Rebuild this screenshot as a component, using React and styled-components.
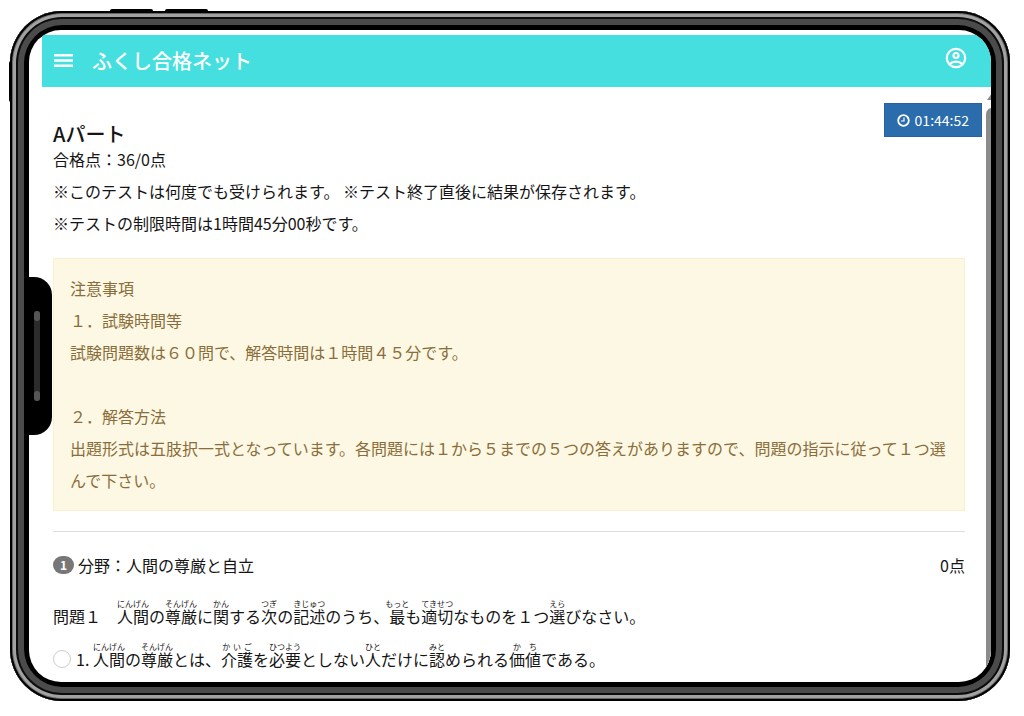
import React from "react";
import styled, { createGlobalStyle } from "styled-components";

const GlobalStyle = createGlobalStyle`
  * {
    box-sizing: border-box;
  }
  body {
    margin: 0;
    background: #fff;
    color: #151515;
    font-family: "Noto Sans CJK JP", "Noto Sans", sans-serif;
    font-size: 16px;
    line-height: 32px;
  }
`;

const Stage = styled.div`
  height: 100vh;
  padding: 11px 14px 15px 10px;
`;

const Device = styled.div`
  position: relative;
  height: 100%;
  padding: 19px;
  background: #000;
  border-radius: 52px;
  box-shadow: inset 0 0 0 2px #000, inset 0 0 0 3px #666,
    inset 0 0 0 6px #a2a2a2, inset 0 0 0 8px #0c0c0c, inset 0 0 0 14px #4b4b4b;
`;

const SideKey = styled.span`
  position: absolute;
  z-index: -1;
  background: #000;
  border-radius: 2px;
  top: ${props => props.$top}px;
  left: ${props => props.$left}px;
  width: ${props => (props.$upright ? 4 : 43)}px;
  height: ${props => (props.$upright ? 41 : 4)}px;
`;

const Notch = styled.div`
  position: absolute;
  left: 18px;
  top: 266px;
  width: 24px;
  height: 158px;
  border-radius: 0 18px 18px 0;
  background: #000;
`;

const Speaker = styled.div`
  display: flex;
  flex-direction: column;
  justify-content: space-between;
  width: 6px;
  height: 90px;
  margin: 34px 0 0 6px;
  border-radius: 3px;
  background: #2c2c2c;
`;

const SpeakerEnd = styled.span`
  height: 10px;
  border-radius: 3px;
  background: #555;
`;

const Screen = styled.div`
  display: flex;
  flex-direction: column;
  height: 100%;
  padding: 5px 0 0 13px;
  background: #fff;
  border-radius: 32px;
  overflow: hidden;
`;

const Header = styled.header`
  display: flex;
  flex: none;
  align-items: center;
  height: 52px;
  padding: 0 23px 0 12px;
  background: #45dfdf;
  color: #fff;
`;

const IconButton = styled.button`
  display: flex;
  padding: 0 0 ${props => (props.$raised ? 6 : 0)}px;
  border: 0;
  background: none;
  color: inherit;
`;

const SiteName = styled.span`
  flex: 1;
  margin-left: 18px;
  font-size: 20px;
  font-weight: 500;
`;

const Body = styled.div`
  display: flex;
  flex: 1;
  min-height: 0;
`;

const Content = styled.main`
  flex: 1;
  min-width: 0;
  padding: 16px 4px 0 11px;
  overflow: hidden;
`;

const Inner = styled.div`
  padding-right: 17px;
`;

const TestHeader = styled.div`
  display: flex;
  justify-content: space-between;
  align-items: flex-start;
`;

const Title = styled.h1`
  margin: 17px 0 0;
  font-size: 20px;
  font-weight: 500;
  line-height: 28px;
`;

const Score = styled.p`
  margin: 0 0 4px;
  line-height: 23px;
`;

const Timer = styled.div`
  display: flex;
  align-items: center;
  gap: 5px;
  height: 34px;
  padding: 0 12px;
  border: 1px solid #2a62a0;
  background: #2a6cac;
  color: #fff;
  font-size: 14px;
`;

const Line = styled.p`
  margin: 0;
`;

const Notice = styled.section`
  margin: 19px 0 20px;
  padding: 13px 13px 14px 16px;
  border: 1px solid #faf0d0;
  background: #fcf8e3;
  color: #8a6d3b;
`;

const Divider = styled.hr`
  margin: 0;
  border: 0;
  border-top: 1px solid #ddd;
`;

const Field = styled.div`
  display: flex;
  align-items: center;
  gap: 4px;
  margin-top: 17px;
`;

const Badge = styled.span`
  width: 21px;
  border-radius: 9px;
  background: #777;
  color: #fff;
  font-size: 12px;
  font-weight: 700;
  line-height: 18px;
  text-align: center;
`;

const FieldName = styled.span`
  flex: 1;
`;

const Question = styled.p`
  margin: 18px 0 10px;
  white-space: nowrap;

  rt {
    font-size: 8px;
    line-height: 8px;
  }
`;

const Choice = styled.label`
  display: flex;
  align-items: center;
  gap: 5px;
  white-space: nowrap;

  rt {
    font-size: 8px;
    line-height: 8px;
  }
`;

const Radio = styled.input`
  appearance: none;
  flex: none;
  width: 18px;
  height: 18px;
  margin: 0;
  border: 1px solid #ccc;
  border-radius: 50%;
  background: #fff;
`;

const ScrollBar = styled.div`
  display: flex;
  flex-direction: column;
  align-items: flex-start;
  width: 5px;
  overflow: hidden;
  background: #fcfcfc;
`;

const ScrollThumb = styled.div`
  flex: 1;
  width: 12px;
  margin-top: 3px;
  border-radius: 6px 0 0 0;
  background: #8b8b8b;
`;

const notes = [
  "注意事項",
  "１．試験時間等",
  "試験問題数は６０問で、解答時間は１時間４５分です。",
  "\u00a0",
  "２．解答方法",
  "出題形式は五肢択一式となっています。各問題には１から５までの５つの答えがありますので、問題の指示に従って１つ選んで下さい。"
];

const question = [
  "問題１　",
  ["人間", "にんげん"],
  "の",
  ["尊厳", "そんげん"],
  "に",
  ["関", "かん"],
  "する",
  ["次", "つぎ"],
  "の",
  ["記述", "きじゅつ"],
  "のうち、",
  ["最", "もっと"],
  "も",
  ["適切", "てきせつ"],
  "なものを１つ",
  ["選", "えら"],
  "びなさい。"
];

const choice = [
  "1. ",
  ["人間", "にんげん"],
  "の",
  ["尊厳", "そんげん"],
  "とは、",
  ["介護", "かいご"],
  "を",
  ["必要", "ひつよう"],
  "としない",
  ["人", "ひと"],
  "だけに",
  ["認", "みと"],
  "められる",
  ["価値", "かち"],
  "である。"
];

const Furigana = ({ parts }) =>
  parts.map((part, i) =>
    typeof part === "string" ? (
      part
    ) : (
      <ruby key={i}>
        {part[0]}
        <rt>{part[1]}</rt>
      </ruby>
    )
  );

const MenuIcon = () => (
  <svg width="20" height="14" viewBox="0 0 20 14" fill="currentColor">
    <path d="M0 0h19v2.4H0zM0 5.3h19v2.4H0zM0 10.6h19v2.4H0z" />
  </svg>
);

const AccountIcon = () => (
  <svg width="24" height="24" viewBox="0 0 24 24" fill="none" stroke="currentColor" strokeWidth="2.2">
    <circle cx="12" cy="12" r="9.2" />
    <circle cx="12" cy="9.5" r="2.5" />
    <path d="M5.6 18c1.6-1.6 3.8-2.4 6.4-2.4s4.8.8 6.4 2.4" />
  </svg>
);

const ClockIcon = () => (
  <svg width="13" height="13" viewBox="0 0 13 13" fill="none" stroke="currentColor">
    <circle cx="6.5" cy="6.5" r="5.3" strokeWidth="1.8" />
    <path d="M7 3.5V7H4" strokeWidth="1.2" />
  </svg>
);

class App extends React.Component {
  render() {
    return (
      <Stage>
        <GlobalStyle />
        <Device>
          <SideKey $top={-2} $left={100} />
          <SideKey $top={-2} $left={155} />
          <SideKey $top={50} $left={-1} $upright />
          <Screen>
            <Header>
              <IconButton aria-label="メニュー">
                <MenuIcon />
              </IconButton>
              <SiteName>ふくし合格ネット</SiteName>
              <IconButton aria-label="アカウント" $raised>
                <AccountIcon />
              </IconButton>
            </Header>
            <Body>
              <Content>
                <TestHeader>
                  <div>
                    <Title>Aパート</Title>
                    <Score>合格点：36/0点</Score>
                  </div>
                  <Timer>
                    <ClockIcon />
                    01:44:52
                  </Timer>
                </TestHeader>
                <Inner>
                  <Line>※このテストは何度でも受けられます。 ※テスト終了直後に結果が保存されます。</Line>
                  <Line>※テストの制限時間は1時間45分00秒です。</Line>
                  <Notice>
                    {notes.map((note, i) => (
                      <Line key={i}>{note}</Line>
                    ))}
                  </Notice>
                  <Divider />
                  <Field>
                    <Badge>1</Badge>
                    <FieldName>分野：人間の尊厳と自立</FieldName>
                    <span>0点</span>
                  </Field>
                  <Question>
                    <Furigana parts={question} />
                  </Question>
                  <Choice>
                    <Radio type="radio" name="answer" />
                    <span>
                      <Furigana parts={choice} />
                    </span>
                  </Choice>
                </Inner>
              </Content>
              <ScrollBar>
                <svg width="12" height="18" viewBox="0 0 12 18">
                  <path d="M1 13L6 6l5 7z" fill="#8b8b8b" />
                </svg>
                <ScrollThumb />
              </ScrollBar>
            </Body>
          </Screen>
          <Notch>
            <Speaker>
              <SpeakerEnd />
              <SpeakerEnd />
            </Speaker>
          </Notch>
        </Device>
      </Stage>
    );
  }
}

export default App;
